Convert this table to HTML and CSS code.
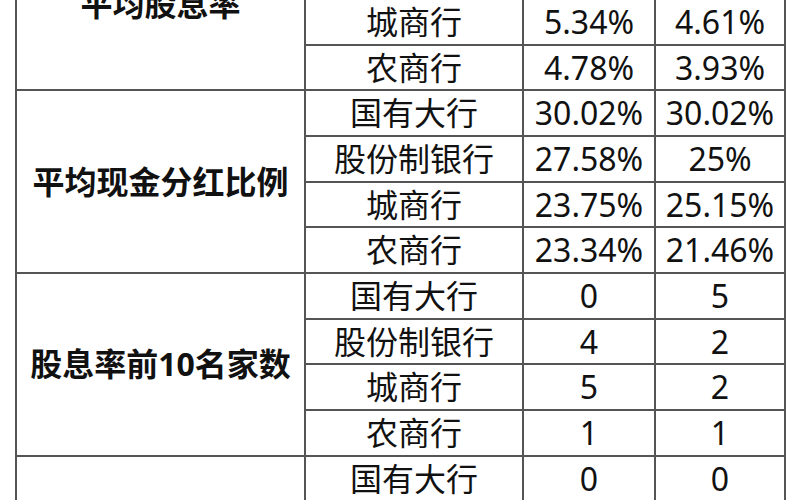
FILE: index.html
```html
<!DOCTYPE html>
<html lang="zh-CN">
<head>
<meta charset="utf-8">
<title>银行分红统计</title>
<link rel="stylesheet" href="styles.css">
</head>
<body>
<div class="page">
  <table class="stats">
    <colgroup>
      <col class="c-group">
      <col class="c-type">
      <col class="c-val">
      <col class="c-val2">
    </colgroup>
    <tbody>
      <tr>
        <th class="group group-first" rowspan="4">平均股息率</th>
        <td class="type">国有大行</td><td class="num"></td><td class="num"></td>
      </tr>
      <tr><td class="type">股份制银行</td><td class="num"></td><td class="num"></td></tr>
      <tr><td class="type">城商行</td><td class="num">5.34%</td><td class="num">4.61%</td></tr>
      <tr><td class="type">农商行</td><td class="num">4.78%</td><td class="num">3.93%</td></tr>

      <tr>
        <th class="group" rowspan="4">平均现金分红比例</th>
        <td class="type">国有大行</td><td class="num">30.02%</td><td class="num">30.02%</td>
      </tr>
      <tr><td class="type">股份制银行</td><td class="num">27.58%</td><td class="num">25%</td></tr>
      <tr><td class="type">城商行</td><td class="num">23.75%</td><td class="num">25.15%</td></tr>
      <tr><td class="type">农商行</td><td class="num">23.34%</td><td class="num">21.46%</td></tr>

      <tr>
        <th class="group" rowspan="4">股息率前10名家数</th>
        <td class="type">国有大行</td><td class="num">0</td><td class="num">5</td>
      </tr>
      <tr><td class="type">股份制银行</td><td class="num">4</td><td class="num">2</td></tr>
      <tr><td class="type">城商行</td><td class="num">5</td><td class="num">2</td></tr>
      <tr><td class="type">农商行</td><td class="num">1</td><td class="num">1</td></tr>

      <tr>
        <th class="group" rowspan="1"></th>
        <td class="type">国有大行</td><td class="num">0</td><td class="num">0</td>
      </tr>
    </tbody>
  </table>
</div>
</body>
</html>
```

FILE: styles.css
```css
html, body {
  margin: 0;
  padding: 0;
  background: #ffffff;
}

.page {
  width: 800px;
  height: 500px;
  overflow: hidden;
  background: #ffffff;
}

.stats {
  margin-top: -93.4px;
  margin-left: 15px;
  width: 771px;
  table-layout: fixed;
  border-collapse: collapse;
  font-family: "Noto Sans", "Noto Sans CJK SC", sans-serif;
  font-size: 32px;
  line-height: 1;
  color: #111111;
}

.c-group { width: 289px; }
.c-type { width: 218px; }
.c-val { width: 132px; }
.c-val2 { width: 130px; }

.stats th,
.stats td {
  border: 2px solid #555555;
  padding: 0;
  height: 43.7px;
  text-align: center;
  vertical-align: middle;
  white-space: nowrap;
}

.stats .group {
  font-weight: 700;
}

.stats .group-first {
  padding-top: 10px;
}

.stats .type,
.stats .num {
  font-weight: 400;
}
```
